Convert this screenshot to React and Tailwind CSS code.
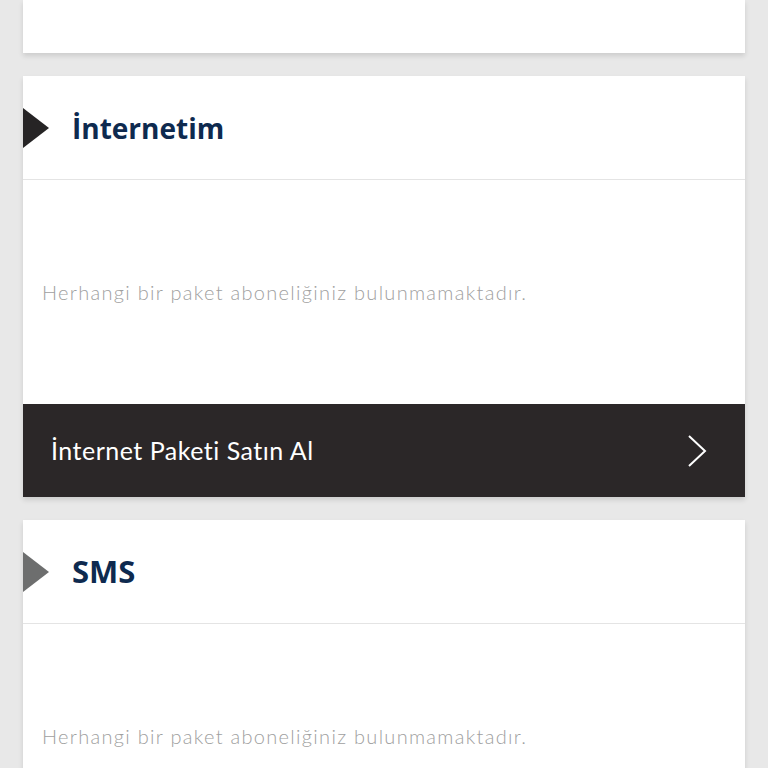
import React from "react";

const Triangle = ({ color }) => (
  <svg width="26" height="40" viewBox="0 0 26 40" className="shrink-0">
    <polygon points="0,0 26,20 0,40" fill={color} />
  </svg>
);

const PackageCard = ({ title, titleSize, arrowColor, buttonLabel }) => (
  <div className="bg-white shadow-[0_3px_5px_rgba(0,0,0,0.12)]">
    <div className="h-[104px] flex items-center border-b border-[#e4e4e4]">
      <Triangle color={arrowColor} />
      <h2 className={`ml-[23px] ${titleSize} font-bold text-[#0e2a4f] font-['Open_Sans',sans-serif] leading-none`}>
        {title}
      </h2>
    </div>
    <div className="h-[224px] flex items-center px-[19px]">
      <p className="text-[20px] text-[#a0a0a0] font-['Lato',sans-serif] font-light tracking-[1.3px]">
        Herhangi bir paket aboneliğiniz bulunmamaktadır.
      </p>
    </div>
    {buttonLabel && (
      <button className="w-full h-[93px] bg-[#2b2728] flex items-center justify-between pl-[28px] pr-[38px] text-white">
        <span className="text-[25px] font-['Lato',sans-serif] tracking-[0.5px]">{buttonLabel}</span>
        <svg width="20" height="32" viewBox="0 0 20 32" fill="none">
          <path d="M2 1 L18 16 L2 31" stroke="white" strokeWidth="2" />
        </svg>
      </button>
    )}
  </div>
);

export default function App() {
  return (
    <div className="bg-[#e8e8e8] h-[768px] overflow-hidden px-[23px] flex flex-col gap-[23px]">
      <div className="bg-white h-[53px] shrink-0 shadow-[0_3px_5px_rgba(0,0,0,0.12)]" />
      <PackageCard title="İnternetim" titleSize="text-[28px]" arrowColor="#262425" buttonLabel="İnternet Paketi Satın Al" />
      <PackageCard title="SMS" titleSize="text-[31px]" arrowColor="#6d6e6e" />
    </div>
  );
}
